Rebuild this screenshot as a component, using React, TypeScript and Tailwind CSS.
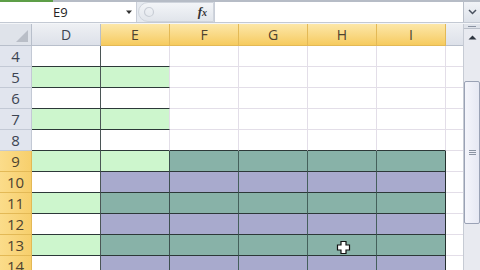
import React from 'react';

const COLS = ['D', 'E', 'F', 'G', 'H', 'I'];
const ROWS = [4, 5, 6, 7, 8, 9, 10, 11, 12, 13, 14];

const GREEN = 'bg-[#cdf6cd]';
const TEAL = 'bg-[#88b2a8]';
const PURPLE = 'bg-[#a8aacd]';
const WHITE = 'bg-white';

function cellClass(col: string, row: number): string {
  const odd = row % 2 === 1;
  let bg = WHITE;
  let br = 'border-r-[#e3dee8]';
  let bb = 'border-b-[#e3dee8]';
  if (col === 'D') {
    bg = odd ? GREEN : WHITE;
    br = 'border-r-[#4b5656]';
    bb = 'border-b-[#2c3838]';
  } else if (col === 'E') {
    if (row <= 9) {
      bg = odd ? GREEN : WHITE;
      bb = 'border-b-[#2c3838]';
      br = row === 9 ? 'border-r-[#3d5050]' : 'border-r-[#e3dee8]';
    } else {
      bg = odd ? TEAL : PURPLE;
      bb = 'border-b-[#2c3838]';
      br = 'border-r-[#3d5050]';
    }
  } else {
    if (row >= 9) {
      bg = odd ? TEAL : PURPLE;
      bb = 'border-b-[#2c3838]';
      br = col === 'I' ? 'border-r-[#253030]' : 'border-r-[#45605c]';
    } else if (row === 8) {
      bb = 'border-b-[#2c3838]';
    }
  }
  return `${bg} border-r border-b ${br} ${bb}`;
}

function Cursor() {
  return (
    <svg className="absolute left-[336px] top-[240px]" width="15" height="15" viewBox="0 0 15 15">
      <path
        d="M5 1.5h5v3.5h3.5v5H10v3.5H5V10H1.5V5H5z"
        fill="#ffffff"
        stroke="#111"
        strokeWidth="1.2"
        strokeLinejoin="miter"
      />
    </svg>
  );
}

export default function App() {
  const font = { fontFamily: '"Open Sans", "Noto Sans", Arial, sans-serif' };
  return (
    <div className="relative w-[480px] h-[270px] overflow-hidden bg-[#e9edf3]" style={font}>
      {/* top strip */}
      <div className="flex h-[2px]">
        <div className="w-[53px] bg-[#5d9e47]" />
        <div className="flex-1 bg-[#b6bcc6]" />
      </div>
      {/* formula bar */}
      <div className="flex h-[21px] border-b border-[#c3c9d3] bg-[#e6eaf0]">
        <div className="relative flex w-[137px] items-center bg-white border-r border-[#c9ced8]">
          <span className="absolute left-[53px] top-[2px] text-[13px] leading-[16px] text-[#222]">E9</span>
          <svg className="absolute left-[125px] top-[8px]" width="8" height="5" viewBox="0 0 8 5">
            <path d="M1 0.5h6L4 4z" fill="#333" />
          </svg>
        </div>
        <div className="relative w-[76px] bg-gradient-to-b from-[#f3f5f8] to-[#e1e5eb] rounded-l-[10px] border border-[#cfd4dc] ml-[1px]">
          <svg className="absolute left-[4px] top-[3px]" width="12" height="12" viewBox="0 0 12 12">
            <circle cx="6" cy="6" r="4.5" fill="none" stroke="#c9ced6" strokeWidth="1.2" />
          </svg>
          <span className="absolute left-[59px] top-[0px] text-[13px] leading-[17px] italic font-bold text-[#333]" style={{ fontFamily: '"Liberation Serif", serif' }}>
            f<span className="text-[10px]">x</span>
          </span>
        </div>
        <div className="w-[250px] bg-white border-l border-[#c9ced8]" />
        <div className="flex w-[17px] items-center justify-center bg-gradient-to-b from-[#f1f3f7] to-[#dde2ea] border-l border-[#b9bfc9]">
          <svg width="9" height="6" viewBox="0 0 9 6">
            <path d="M1 1l3.5 3.5L8 1" fill="none" stroke="#4a5260" strokeWidth="1.5" />
          </svg>
        </div>
      </div>
      <div className="h-[1px] bg-[#f4f6f9]" />
      {/* sheet area */}
      <div className="flex">
        <div className="grid grid-cols-[32px_repeat(6,69px)_18px] grid-rows-[22px_repeat(11,21px)] w-[463px] bg-white">
          {/* corner */}
          <div className="relative bg-[#dfe3ea] border-r border-b border-[#b8bfcb]">
            <svg className="absolute right-[3px] bottom-[3px]" width="12" height="12" viewBox="0 0 12 12">
              <path d="M12 0V12H0z" fill="#b9bec7" />
            </svg>
          </div>
          {COLS.map((c) => (
            <div
              key={c}
              className={`flex items-center justify-center text-[14px] border-r border-b ${
                c === 'D'
                  ? 'bg-gradient-to-b from-[#eef0f4] to-[#dde1e9] text-[#3c4452] border-[#b8bfcb]'
                  : 'bg-gradient-to-b from-[#fce7a8] to-[#f6cb5e] text-[#4e4330] border-[#e3b956]'
              }`}
            >
              {c}
            </div>
          ))}
          <div className="bg-gradient-to-b from-[#eef0f4] to-[#dde1e9] border-b border-[#b8bfcb]" />
          {ROWS.map((r) => (
            <React.Fragment key={r}>
              <div
                className={`flex items-center justify-center text-[15px] border-r border-b ${
                  r >= 9
                    ? 'bg-gradient-to-r from-[#fbdc8a] to-[#f7cf6c] text-[#4e4330] border-[#e3b956]'
                    : 'bg-[#e1e5ee] text-[#3c4452] border-[#c3c9d5]'
                }`}
              >
                {r}
              </div>
              {COLS.map((c) => (
                <div key={c} className={cellClass(c, r)} />
              ))}
              <div className="bg-white border-b border-[#e3dee8]" />
            </React.Fragment>
          ))}
        </div>
        {/* vertical scrollbar */}
        <div className="flex w-[17px] flex-col bg-[#e8eaf0] border-l border-[#c6cbd4]">
          <div className="flex h-[5px] items-center justify-center border-b border-[#b9bfc9] bg-[#dfe3ea]">
            <div className="h-[1px] w-[8px] bg-[#8a93a2]" />
          </div>
          <div className="flex h-[17px] items-center justify-center">
            <svg width="9" height="5" viewBox="0 0 9 5">
              <path d="M0.5 4.5L4.5 0.5L8.5 4.5z" fill="#2f3640" />
            </svg>
          </div>
          <div className="h-[35px]" />
          <div className="flex h-[143px] flex-col items-center justify-center gap-[1px] rounded-[2px] border border-[#9aa2b5] bg-gradient-to-r from-[#f4f5fb] to-[#e6e8f3] mx-[0px]">
            <div className="h-[1px] w-[7px] bg-[#8a93a2]" />
            <div className="h-[1px] w-[7px] bg-[#8a93a2]" />
            <div className="h-[1px] w-[7px] bg-[#8a93a2]" />
          </div>
          <div className="flex-1" />
        </div>
      </div>
      <Cursor />
    </div>
  );
}
